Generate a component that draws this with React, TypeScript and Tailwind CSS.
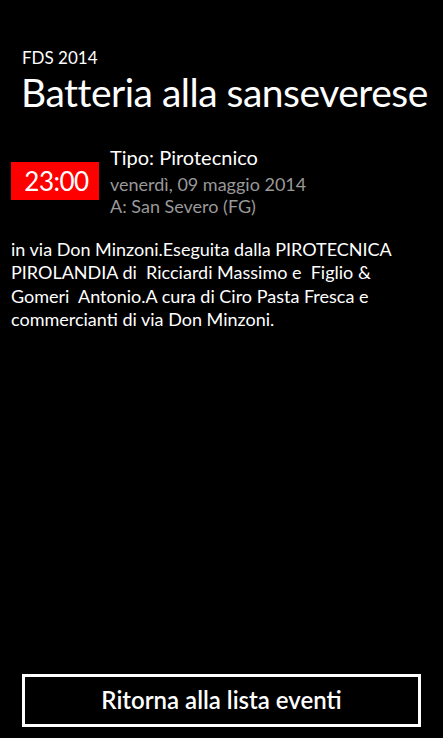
import React from 'react';

const font = { fontFamily: 'Lato, "Open Sans", sans-serif' };

export default function App() {
  return (
    <div className="w-[443px] h-[738px] bg-black text-white flex flex-col overflow-hidden" style={font}>
      {/* Header */}
      <div className="pt-[48px] px-[22px]">
        <div className="text-[17px] leading-[20px]">FDS 2014</div>
        <div className="text-[39px] leading-[48px] -ml-[1px] tracking-[-0.5px] whitespace-nowrap">Batteria alla sanseverese</div>
      </div>

      {/* Event info */}
      <div className="flex items-start mt-[28px] px-[11px]">
        <div className="mt-[18px] w-[88px] h-[38px] bg-[#ff0000] flex items-center justify-center text-[26px] leading-none tracking-[-0.5px] pl-[3px]">
          23:00
        </div>
        <div className="ml-[11px] flex flex-col">
          <div className="text-[20px] leading-[26px]">Tipo: Pirotecnico</div>
          <div className="mt-[3px] text-[18px] leading-[22px] text-[#999999]">venerdì, 09 maggio 2014</div>
          <div className="text-[18px] leading-[22px] text-[#999999]">A: San Severo (FG)</div>
        </div>
      </div>

      {/* Description */}
      <p className="px-[11px] pr-[30px] mt-[21px] text-[18px] leading-[23.33px] whitespace-pre-wrap">
        in via Don Minzoni.Eseguita dalla PIROTECNICA PIROLANDIA di  Ricciardi Massimo e  Figlio &amp; Gomeri  Antonio.A cura di Ciro Pasta Fresca e commercianti di via Don Minzoni.
      </p>

      <div className="flex-1" />

      {/* Button */}
      <div className="px-[22px] pb-[11px]">
        <button className="w-[399px] h-[53px] border-[3px] border-white bg-black text-white text-[24px] font-semibold flex items-center justify-center pb-[1px]">
          Ritorna alla lista eventi
        </button>
      </div>
    </div>
  );
}
